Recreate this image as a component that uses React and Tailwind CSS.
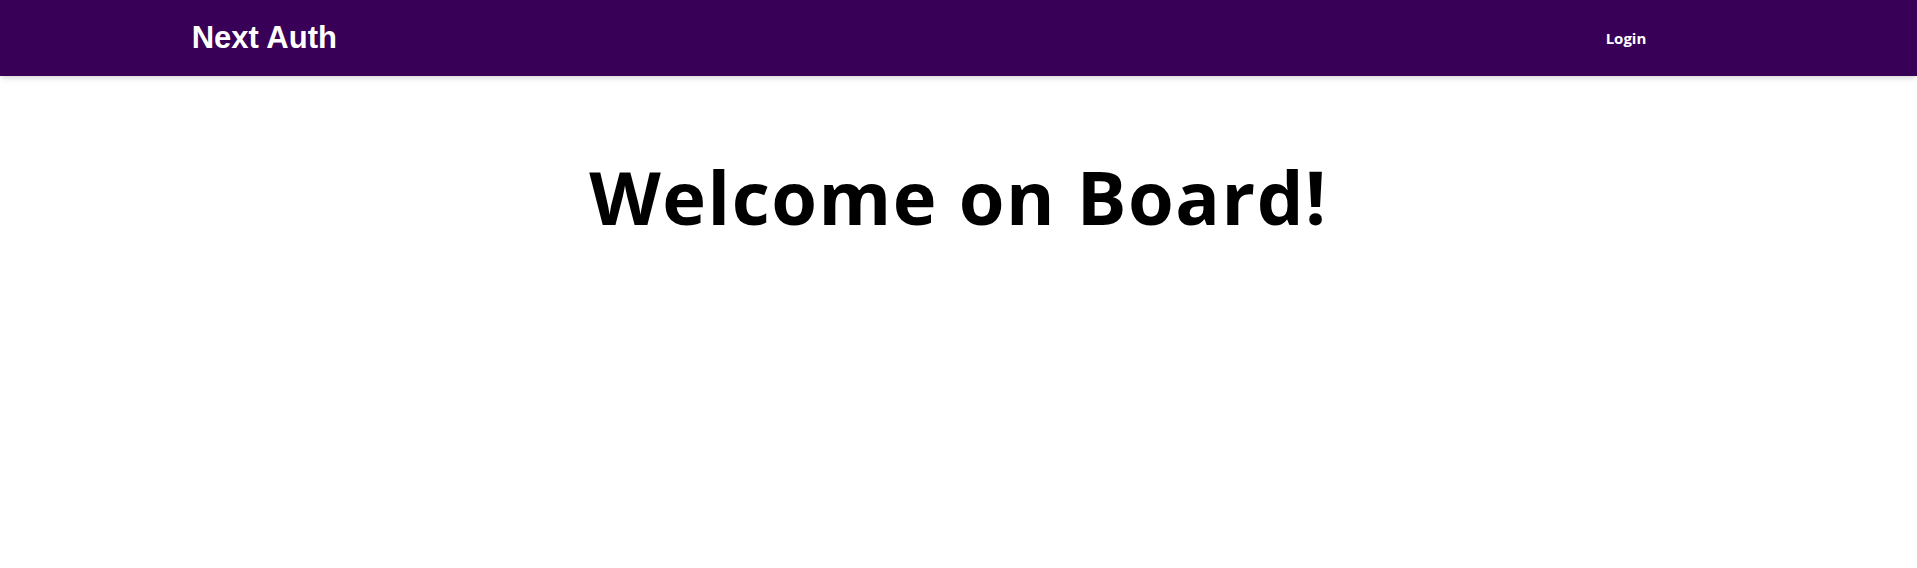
export default function App() {
  return (
    <div className="min-h-[568px] bg-white">
      {/* NAVBAR */}
      <header className="h-[76px] bg-[#390057] shadow-md">
        <div className="mx-auto flex h-full w-[80%] items-center justify-between">
          <h1
            className="text-[31px] font-bold text-white"
            style={{ fontFamily: '"Liberation Sans", Arial, sans-serif' }}
          >
            Next Auth
          </h1>
          <nav className="mr-[79px]">
            <a
              href="#"
              className="text-[15px] font-bold text-white"
              style={{ fontFamily: '"Open Sans", "Noto Sans", sans-serif' }}
            >
              Login
            </a>
          </nav>
        </div>
      </header>

      {/* MAIN */}
      <main className="flex justify-center pt-[84px]">
        <h2
          className="text-[74px] font-bold leading-none tracking-[1.5px] text-black"
          style={{ fontFamily: '"Open Sans", "Noto Sans", sans-serif' }}
        >
          Welcome on Board!
        </h2>
      </main>
    </div>
  );
}
